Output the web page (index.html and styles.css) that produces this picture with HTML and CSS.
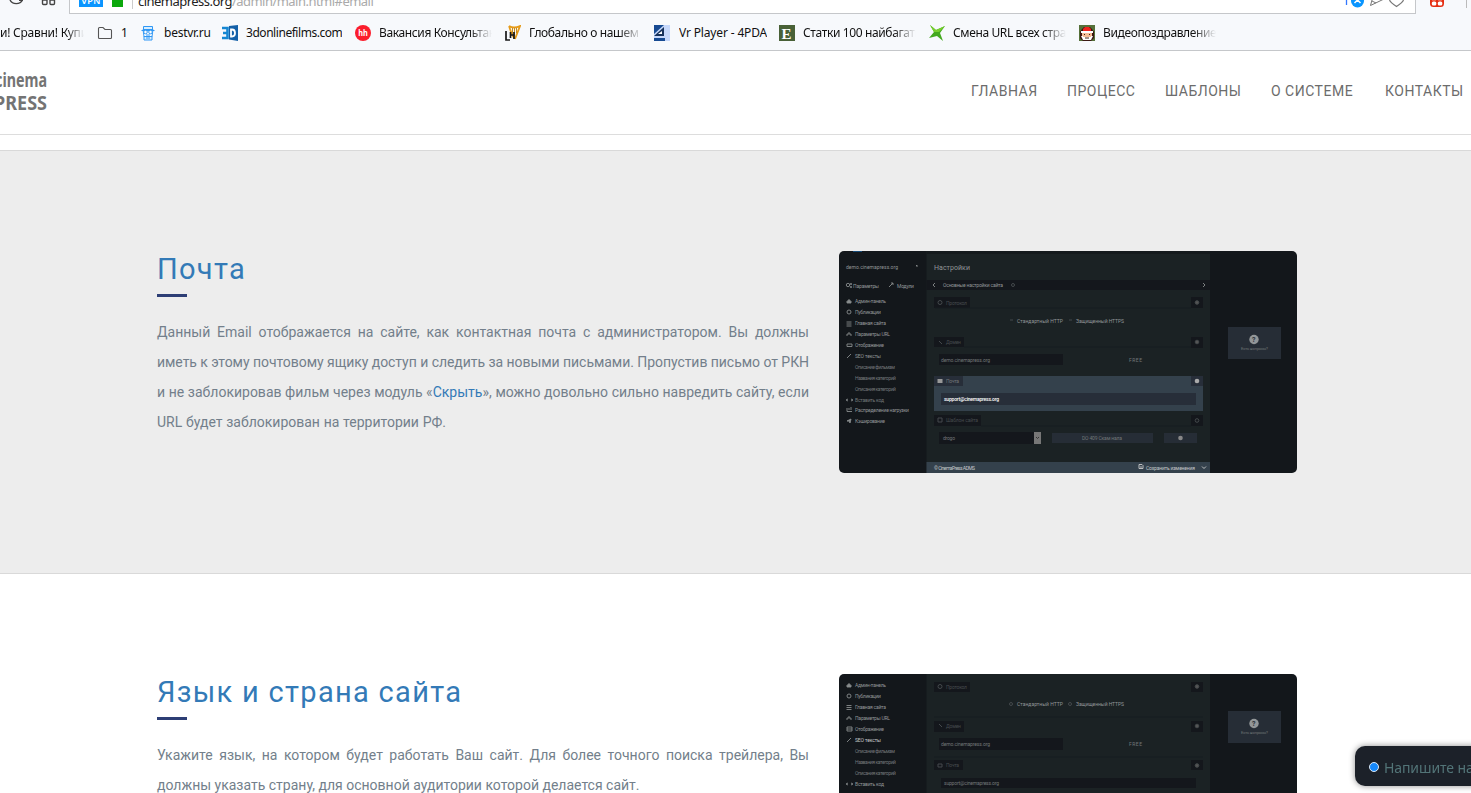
FILE: index.html
```
<!DOCTYPE html>
<html lang="ru">
<head>
<meta charset="utf-8">
<title>CinemaPress</title>
<link rel="stylesheet" href="styles.css">
</head>
<body>
<div class="browser">
  <div class="toolbar">
    <svg class="toolbar-icons" width="69" height="14" fill="none" stroke="#444" stroke-width="1.4"><path d="M10 0a6.800 6 0 0 0 12.500 0M19 .2h4M42.500 0v3.500q0 1 1 1h2.500q1 0 1-1V0zM50 0v3.500q0 1 1 1h2.500q1 0 1-1V0z"/></svg>
    <div class="address">
      <span class="vpn"><b>VPN</b></span><span class="lock"></span><span class="divider"></span>
      <span class="url">cinemapress.org<i>/admin/main.html#email</i></span>
      <svg class="address-icons" width="72" height="13" fill="none"><path d="M3.500 0v5" stroke="#37f" stroke-width="1.300"/><circle cx="14.500" cy="1" r="6.500" fill="#0a95ff"/><path d="M11.500 3l3-3 3 3" stroke="#fff" stroke-width="1.500"/><path d="M29 0l-1.500 5.500L41-1M29 1l4 2" stroke="#777"/><path d="M46.500 0q1 2.500 7 6.500q6-4 7-6.500" stroke="#777" stroke-width="1.200"/></svg>
    </div>
    <svg class="toolbar-end" width="55" height="14"><rect x="14" y="-7" width="14" height="14" rx="3.500" fill="#e52d10"/><rect x="15.800" y="1.500" width="4.500" height="4" rx="1.500" fill="#fff"/><rect x="21.800" y="1.500" width="4.500" height="4" rx="1.500" fill="#fff"/><path d="M16-.5h4M22-.5h4" stroke="#fff" stroke-width="1.500"/><path d="M50.500 0v8" stroke="#bbb"/></svg>
  </div>
  <div class="bookmarks">
    <div class="bm bm-first"><span class="fade">и! Сравни! Купи</span></div>
    <div class="bm bm-folder"><svg width="16" height="16" fill="none" stroke="#555" stroke-width="1.100"><path d="M1.500 3.500q0-1 1-1h3.500l2 2h5.500q1 0 1 1v7q0 1-1 1h-11q-1 0-1-1z"/></svg><span>1</span></div>
    <div class="bm bm-best"><svg width="16" height="16"><path d="M3.500 4V1.500h9V4M4 11h8v4H4z" fill="#d9efff" stroke="#3098f5"/><path d="M3 4.500h10l-1 7H4z" fill="#fff" stroke="#3098f5"/><path d="M1.500 5.500h13M6 10h4M6 13h4" stroke="#3098f5"/><circle cx="5.500" cy="7" r="1.800" fill="#fff" stroke="#3098f5"/><circle cx="10.500" cy="7" r="1.800" fill="#fff" stroke="#3098f5"/></svg><span>bestvr.ru</span></div>
    <div class="bm bm-3d"><svg width="16" height="16" fill="none"><path d="M7 1l9-1v16l-9-1.500z" fill="#1460a8"/><path d="M0 3h5.500v10H0M1 8h5" stroke="#1687d2" stroke-width="2.600"/><path d="M9 4.500h1q3 0 3 3.500t-3 3.500H9z" stroke="#fff" stroke-width="1.800"/></svg><span>3donlinefilms.com</span></div>
    <div class="bm bm-hh"><svg width="16" height="16"><circle cx="8" cy="8" r="8" fill="#fb1d2c"/><text x="3.200" y="11" class="hh" textLength="9.600" lengthAdjust="spacingAndGlyphs">hh</text></svg><span class="fade">Вакансия Консультан</span></div>
    <div class="bm bm-harp"><svg width="16" height="16" fill="none"><path d="M4 1q5 3 11 0l-5 13M4 1l2 6 3 6" stroke="#e59a18" stroke-width="1.800"/><path d="M7.500 3v6M9.500 3v8M11.500 3v5" stroke="#c68b20"/><path d="M1 6v9h4M5.500 7v6M5.500 10h4M9 7v7" stroke="#181818" stroke-width="1.700"/></svg><span class="fade">Глобально о нашем о</span></div>
    <div class="bm bm-pda"><svg width="16" height="16"><path d="M0 0h16v16H0z" fill="#c6d8fb"/><path d="M0 0h10L0 9zM0 13h11v3H0z" fill="#174a92"/><path d="M0 11L10 2v9z" fill="#17325c"/><path d="M4 9l4-3v3z" fill="#fff"/></svg><span>Vr Player - 4PDA</span></div>
    <div class="bm bm-e"><svg width="16" height="16"><path d="M0 0h16v16H0z" fill="#496137"/><text x="2.500" y="13.500" class="letter-e">E</text></svg><span class="fade">Статки 100 найбагати</span></div>
    <div class="bm bm-x"><svg width="16" height="16"><path d="M1 0l6 5 9-4-5 7 3 8-6-5-8 2 5-6z" fill="#43a91e"/><path d="M1 0l6 5 9-4-6 6-5 0z" fill="#77cf2c"/></svg><span class="fade">Смена URL всех страни</span></div>
    <div class="bm bm-santa"><svg width="16" height="16"><path d="M0 0h16v16H0z" fill="#557039"/><path d="M3 4l2-2h6l2 2 2 3v6l-3 3H4l-3-3V7z" fill="#3b1812"/><path d="M4 4l2-2h4l2 2v2H4z" fill="#ef211c"/><path d="M2 6h12v2H2z" fill="#fff"/><path d="M3 8h10v4H3z" fill="#f6bc95"/><path d="M2 11h2v1h8v-1h2l-2 4H4z" fill="#fff"/><path d="M5 9h1v1H5zM10 9h1v1h-1zM6 12.500h4v1H6z" fill="#421"/></svg><span class="fade">Видеопоздравление</span></div>
  </div>
</div>
<header class="header">
  <svg class="logo" width="50" height="50"><text x="-5" y="19.500" textLength="52" lengthAdjust="spacingAndGlyphs">cinema</text><text x="-6" y="43" textLength="53" lengthAdjust="spacingAndGlyphs">PRESS</text></svg>
  <nav class="nav"><a class="n1">ГЛАВНАЯ</a><a class="n2">ПРОЦЕСС</a><a class="n3">ШАБЛОНЫ</a><a class="n4">О СИСТЕМЕ</a><a class="n5">КОНТАКТЫ</a></nav>
</header>
<main>
<section class="section section-gray">
  <div class="copy">
    <h2 class="t1">Почта</h2>
    <p><span class="line">Данный Email отображается на сайте, как контактная почта с администратором. Вы должны</span><span class="line tight">иметь к этому почтовому ящику доступ и следить за новыми письмами. Пропустив письмо от РКН</span><span class="line">и не заблокировав фильм через модуль «<a>Скрыть</a>», можно довольно сильно навредить сайту, если</span><span class="line w1">URL будет заблокирован на территории РФ.</span></p>
  </div>
  <svg class="shot" width="458" height="222" viewBox="0 0 458 222">
    <path d="M0 0h458v222H0z" fill="#13171b"/><path d="M87.500 0h283.500v222H87.500z" fill="#1b2224"/><path d="M87.500 0h283.500v3H87.500z" fill="#151a1d"/><path d="M14 0h9v1h-9z" fill="#164a76"/>
    <path d="M87.500 29h283.500v10H87.500zM95 46h36v11H95zM95 86h30v10H95zM100 103h124v11H100zM95 164h47v11H95zM100 181h95v12H100zM352 46h12v11h-12zM352 86h12v11h-12zM352 164h12v11h-12z" fill="#14171c"/>
    <path d="M95 125h269v35H95z" fill="#34414c"/><path d="M95 125h29v10H95zM102 142h255v12H102zM352 125h12v10h-12z" fill="#272e39"/>
    <path d="M213 182h101v10H213zM325 182h33v10h-33zM389 76h53v32h-53z" fill="#262d36"/><path d="M87.500 211h283.500v11H87.500z" fill="#34414c"/><path d="M195 181h7v12h-7z" fill="#777"/>
    <path d="M96 57h256M125 96h227M142 175h210" stroke="#171d20" fill="none"/>
    <g class="tiny"><text x="7" y="17.500" textLength="52">demo.cinemapress.org</text><text x="95" y="19" class="settings" textLength="36">Настройки</text><text x="14" y="36.500" textLength="26">Параметры</text><text x="58" y="36.500" textLength="17">Модули</text><text x="104" y="36" textLength="60">Основные настройки сайта</text>
      <text x="16" y="52" textLength="31">Админ-панель</text><text x="16" y="63" textLength="26">Публикации</text><text x="16" y="74" textLength="31">Главная сайта</text><text x="16" y="85" textLength="35">Параметры URL</text><text x="16" y="96" textLength="29">Отображение</text><text x="16" y="107" textLength="26">SEO тексты</text><text x="16" y="118" textLength="40" class="dim">Описание фильмам</text><text x="16" y="129" textLength="41" class="dim">Названия категорий</text><text x="16" y="140" textLength="41" class="dim">Описания категорий</text><text x="16" y="151" textLength="29" class="dim">Вставить код</text><text x="16" y="161" textLength="54">Распределение нагрузки</text><text x="16" y="172" textLength="30">Кэширование</text>
      <text x="178" y="71.500" textLength="46">Стандартный HTTP</text><text x="237" y="71.500" textLength="48">Защищенный HTTPS</text><text x="107" y="54" textLength="21" class="dark">Протокол</text><text x="107" y="93" textLength="15" class="dark">Домен</text><text x="102" y="110.500" textLength="49" class="dim">demo.cinemapress.org</text><text x="290" y="110.500" textLength="13" class="dim">FREE</text><text x="107" y="132" textLength="13" class="dim">Почта</text><text x="105" y="150" textLength="55" class="bright">support@cinemapress.org</text><text x="107" y="171" textLength="32" class="dark">Шаблон сайта</text><text x="104" y="189" textLength="12" class="dim">drogo</text><text x="243" y="189" textLength="40" class="dim">DO 409 Скам нала</text><text x="402" y="99" textLength="27" class="dim small">Есть вопросы?</text><text x="95" y="218.500" textLength="41" class="light">© CinemaPress ADMS</text><text x="307" y="218.500" textLength="49" class="light">Сохранить изменения</text></g>
    <g fill="none" stroke="#888c8d" stroke-width=".9"><path d="M79 15h-2l1-1M50 36l4-4M52 32h2v2M96 32l-2 2 2 2M364 32l2 2-2 2"/><circle cx="9" cy="34" r="1.700"/><circle cx="12" cy="33" r=".7"/><circle cx="12" cy="36" r=".7"/><path d="M8 50.500l2-2 2 2v1.500H8z" fill="#888c8d"/><path d="M7.500 71h5M7.500 73h5M7.500 75h5M10 81v2M8 85v-2h4v2M8 93h5v2.500H8zM8 107l4-4M9 148l-2 1 2 1M12 148l2 1-2 1M8 157v3.500h5M10 157v2M12 156v3"/><path d="M8 170l4-2-1 4-1-2z" fill="#888c8d"/><circle cx="10" cy="61" r="2"/><path d="M300 213.500h3l1 1v3h-4zM301 216h2M363 215.500l2 2 2-2" stroke="#ccc"/></g>
    <g fill="none" stroke="#44494c"><circle cx="174" cy="34" r="1.500"/><circle cx="101" cy="51.500" r="2"/><circle cx="358" cy="51.500" r="1.800" fill="#555"/><circle cx="358" cy="91" r="1.800" fill="#555"/><circle cx="358" cy="169.500" r="1.800"/><path d="M100 90l3 3M99 167h4v4h-4zM171 69h3M230 69h3"/></g>
    <path d="M98.500 128h5v4h-5z" fill="#999"/><circle cx="358" cy="130" r="2.300" fill="#aaa"/><circle cx="341.500" cy="187" r="2.300" fill="#888"/><path d="M197 186l1.500 1.500 1.500-1.500" stroke="#333" fill="none"/><circle cx="415" cy="88.500" r="4.700" fill="#929698"/><text x="413" y="91.200" class="question">?</text>
  </svg>
</section>
<section class="section section-white">
  <div class="copy">
    <h2 class="t2">Язык и страна сайта</h2>
    <p><span class="line">Укажите язык, на котором будет работать Ваш сайт. Для более точного поиска трейлера, Вы</span><span class="line w2">должны указать страну, для основной аудитории которой делается сайт.</span></p>
  </div>
  <svg class="shot shot-cut" width="458" height="119" viewBox="0 0 458 119">
    <path d="M0 0h458v222H0z" fill="#13171b"/><path d="M87.500 0h283.500v222H87.500z" fill="#1b2224"/>
    <path d="M95 8h36v10H95zM352 8h12v10h-12zM95 47h30v11H95zM352 47h12v11h-12zM100 64h124v12H100zM95 86h29v10H95zM352 86h12v10h-12zM102 104h255v10H102z" fill="#14171c"/><path d="M389 37h53v32h-53z" fill="#262d36"/><path d="M95 43h269M95 83h269" stroke="#171d20"/>
    <g class="tiny"><text x="16" y="13" textLength="31">Админ-панель</text><text x="16" y="24" textLength="26">Публикации</text><text x="16" y="35" textLength="31">Главная сайта</text><text x="16" y="46" textLength="35">Параметры URL</text><text x="16" y="57" textLength="29">Отображение</text><text x="16" y="68" textLength="26" class="light">SEO тексты</text><text x="16" y="79" textLength="40" class="dim">Описание фильмам</text><text x="16" y="90" textLength="41" class="dim">Названия категорий</text><text x="16" y="101" textLength="41" class="dim">Описания категорий</text><text x="16" y="112" textLength="29">Вставить код</text><text x="107" y="15" textLength="21" class="dark">Протокол</text><text x="178" y="32" textLength="46">Стандартный HTTP</text><text x="237" y="32" textLength="48">Защищенный HTTPS</text><text x="107" y="54" textLength="15" class="dark">Домен</text><text x="102" y="72" textLength="49" class="dim">demo.cinemapress.org</text><text x="290" y="72" textLength="13" class="dim">FREE</text><text x="107" y="93" textLength="13" class="dark">Почта</text><text x="105" y="111" textLength="55" class="dim">support@cinemapress.org</text><text x="402" y="60" textLength="27" class="dim small">Есть вопросы?</text></g>
    <g fill="none" stroke="#888c8d" stroke-width=".9"><path d="M8 11.500l2-2 2 2V13H8z" fill="#888c8d"/><path d="M7.500 31.500h5M7.500 33.500h5M7.500 35.500h5M10 42v2M8 46v-2h4v2M8 53h5v4H8zM8 55h5M8 68l4-4M9 109l-2 1 2 1M12 109l2 1-2 1"/><circle cx="10" cy="22" r="2"/></g>
    <g fill="none" stroke="#44494c"><circle cx="101" cy="12.500" r="2"/><circle cx="358" cy="12.500" r="1.800" fill="#555"/><circle cx="358" cy="52" r="1.800" fill="#555"/><circle cx="358" cy="91.500" r="1.800" fill="#555"/><circle cx="172" cy="30" r="1.500"/><circle cx="231" cy="30" r="1.500"/><path d="M100 50l3 3M99 90h4v3h-4z"/></g>
    <circle cx="415" cy="49.500" r="4.700" fill="#929698"/><text x="413" y="52.200" class="question">?</text>
  </svg>
</section>
</main>
<div class="chat"><span class="dot"></span><span>Напишите нам</span></div>
</body>
</html>
```
FILE: styles.css
```
* { box-sizing: border-box; }
html, body { height: 793px; overflow: hidden; }
body { margin: 0; background: #fff; font-family: "Roboto", sans-serif; }
svg { display: block; flex: none; overflow: hidden; }
.browser { height: 51px; background: #f7f9fc; border-bottom: 1px solid #c5c7ca; font-family: "Noto Sans", sans-serif; }
.toolbar { height: 14px; display: flex; overflow: hidden; }
.address { width: 1347px; height: 14px; display: flex; background: #fff; border: 1px solid #c5c7ca; border-top: 0; padding-left: 9px; }
.vpn { width: 24px; height: 7px; background: #0a95ff; color: #fff; font-size: 9px; line-height: 1px; text-align: center; overflow: hidden; }
.vpn b { display: block; font-weight: 600; letter-spacing: .4px; }
.lock { width: 11px; height: 7px; margin-left: 9px; background: #0ca80c; }
.divider { width: 1px; height: 9px; margin: 0 5px 0 9px; background: #ccc; }
.url { flex: 1; font-size: 13px; line-height: 18px; margin-top: -8px; color: #222; letter-spacing: -.53px; white-space: nowrap; }
.url i { font-style: normal; color: #aaa; }
.bookmarks { height: 37px; display: flex; align-items: center; font-size: 12px; letter-spacing: -.37px; color: #111; }
.bm { display: flex; align-items: center; flex: none; white-space: nowrap; height: 20px; }
.bm span { margin-left: 8px; overflow: hidden; line-height: 18px; }
.bm-first { width: 97px; }
.bm-first .fade { width: 84px; margin-left: 0; letter-spacing: -.25px; }
.bm-folder { width: 43px; }
.bm-best { width: 82px; letter-spacing: -.25px; }
.bm-3d { width: 133px; letter-spacing: -.45px; }
.bm-hh, .bm-harp, .bm-pda, .bm-e, .bm-x, .bm-santa { width: 150px; }
.bm-pda { width: 125px; letter-spacing: -.15px; }
.bm-pda span { margin-left: 9px; }
.bm-harp { width: 149px; }
.fade { width: 113px; -webkit-mask-image: linear-gradient(90deg, #000 80%, transparent); mask-image: linear-gradient(90deg, #000 80%, transparent); }
.hh { font: bold 9px "Open Sans", sans-serif; fill: #fff; letter-spacing: 0; }
.letter-e { font: bold 15px "Liberation Serif", serif; fill: #fff; }
.header { height: 84px; border-bottom: 1px solid #ddd; display: flex; justify-content: space-between; align-items: flex-start; padding-top: 16px; }
.logo text { font: bold 20px "Noto Sans", sans-serif; fill: #747474; }
.nav { display: flex; gap: 30px; padding-right: 7px; color: #6c6c6c; font-size: 14px; line-height: 48px; letter-spacing: .5px; }
.nav a { white-space: nowrap; }
.n1 { width: 66px; } .n2 { width: 68px; } .n3 { width: 76px; } .n4 { width: 84px; } .n5 { width: 79px; }
main { padding-top: 15px; }
.section { height: 424px; padding: 100px 174px 0 157px; display: flex; gap: 30px; align-items: flex-start; }
.section-gray { background: #ededed; border: solid #d9d9d9; border-width: 1px 0; }
.section-white { height: 219px; overflow: hidden; }
.copy { width: 652px; }
h2 { margin: 0; font-size: 29px; line-height: 37px; height: 46px; font-weight: 400; letter-spacing: 1.3px; color: #337ab7; }
h2::after { content: ""; display: block; width: 30px; height: 3px; margin-top: 6px; background: #2d3e75; }
p { margin: 20px 0 0; color: #737f8b; font-size: 14px; line-height: 30px; }
p a { color: #337ab7; }
.line { display: block; white-space: nowrap; text-align: justify; text-align-last: justify; }
.tight { letter-spacing: -.06px; }
.w1 { width: 289px; }
.w2 { width: 482px; }
.shot { border-radius: 5px; }
.shot-cut { border-radius: 5px 5px 0 0; }
.tiny { font: 5px "Roboto", sans-serif; fill: #929698; }
.tiny .settings { font-size: 7px; }
.tiny .small { font-size: 4px; }
.tiny .dim { fill: #727678; }
.tiny .dark { fill: #464b4e; }
.tiny .light { fill: #c5c8ca; }
.tiny .bright { fill: #fff; font-weight: 500; }
.question { font: bold 7px "Roboto", sans-serif; fill: #262d36; }
.chat { position: fixed; left: 1355px; top: 746px; width: 150px; height: 40px; display: flex; align-items: center; gap: 5px; padding: 2px 0 0 14px; border-radius: 10px; background: #1c2129; color: #527477; box-shadow: 0 0 6px rgba(0,0,0,.45); font: 14px "Noto Sans", sans-serif; letter-spacing: -.1px; white-space: nowrap; }
.dot { width: 10px; height: 10px; border: 1px solid #dce8f5; border-radius: 50%; background: #1688fa; }
```
